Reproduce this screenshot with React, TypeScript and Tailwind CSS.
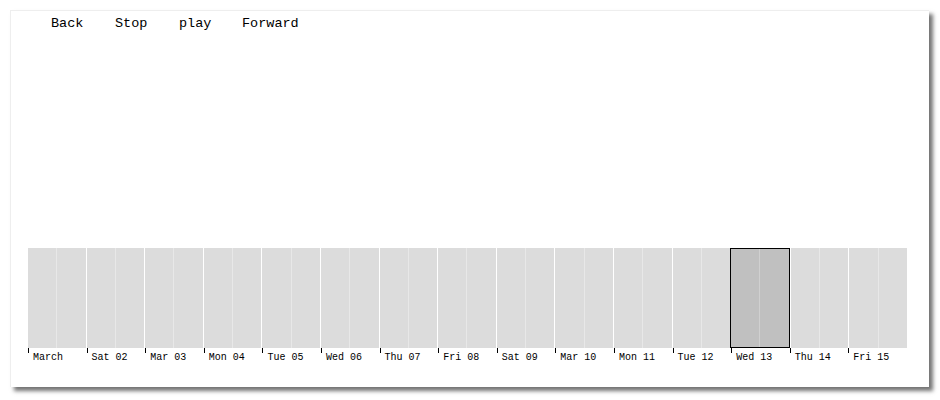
import React from 'react';

const days = [
  'March', 'Sat 02', 'Mar 03', 'Mon 04', 'Tue 05', 'Wed 06', 'Thu 07', 'Fri 08',
  'Sat 09', 'Mar 10', 'Mon 11', 'Tue 12', 'Wed 13', 'Thu 14', 'Fri 15',
];

const App: React.FC = () => {
  const selected = 12;
  return (
    <div className="w-[940px] h-[400px] bg-white pt-[10px] pl-[10px]" style={{ fontFamily: '"Liberation Mono", "DejaVu Sans Mono", monospace' }}>
      <div className="w-[919px] h-[377px] bg-white border-t border-l border-[#eeeeee] shadow-[4px_4px_4px_rgba(0,0,0,0.55)] flex flex-col">
        <div className="flex pl-[40px] pt-[3px] text-[13.5px] leading-[20px] text-black">
          <button className="w-[64px] text-left cursor-pointer">Back</button>
          <button className="w-[64px] text-left cursor-pointer">Stop</button>
          <button className="w-[63px] text-left cursor-pointer">play</button>
          <button className="text-left cursor-pointer">Forward</button>
        </div>

        <div className="mt-[214px] ml-[17px] w-[879px]">
          <div className="flex h-[100px]">
            {days.map((d, i) => {
              const sel = i === selected;
              const cls = sel
                ? 'bg-[#c0c0c0] border border-black'
                : i > 0
                  ? 'bg-[#dcdcdc] border-l border-white'
                  : 'bg-[#dcdcdc]';
              return (
                <div key={d} className={`flex-1 flex ${cls}`}>
                  <div className="flex-1" />
                  <div className={`flex-1 border-l ${sel ? 'border-[#d0d0d0]' : 'border-[#e8e8e8]'}`} />
                </div>
              );
            })}
          </div>
          <div className="flex h-[20px]">
            {days.map((d) => (
              <div key={d} className="flex-1 relative">
                <div className="absolute left-0 top-0 w-px h-[5px] bg-black" />
                <span className="absolute left-[5px] top-[4px] text-[10px] leading-[12px] text-black whitespace-nowrap">{d}</span>
              </div>
            ))}
          </div>
        </div>
      </div>
    </div>
  );
};

export default App;
